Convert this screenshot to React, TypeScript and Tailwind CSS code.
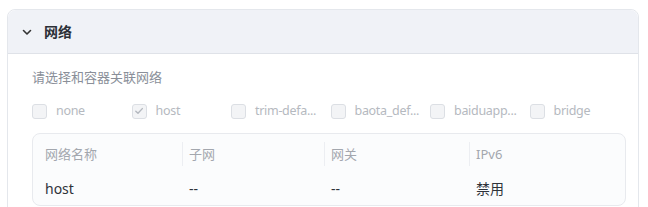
import React from "react";

const networks = [
  { name: "none", label: "none", checked: false },
  { name: "host", label: "host", checked: true },
  { name: "trim-default", label: "trim-defa...", checked: false },
  { name: "baota_default", label: "baota_def...", checked: false },
  { name: "baiduapp_default", label: "baiduapp...", checked: false },
  { name: "bridge", label: "bridge", checked: false },
];

const columns = ["网络名称", "子网", "网关", "IPv6"];
const row = ["host", "--", "--", "禁用"];

const Checkbox: React.FC<{ checked: boolean }> = ({ checked }) => (
  <span className="flex h-[15px] w-[15px] shrink-0 items-center justify-center rounded-[3px] border border-[#dcdfe4] bg-[#f3f4f6]">
    {checked && (
      <svg width="10" height="10" viewBox="0 0 10 10" fill="none">
        <path
          d="M1.8 5.2 L4 7.3 L8.3 2.6"
          stroke="#b4b8bf"
          strokeWidth="1.4"
          strokeLinecap="round"
          strokeLinejoin="round"
        />
      </svg>
    )}
  </span>
);

export default function App() {
  return (
    <div
      className="h-[207px] overflow-hidden bg-white pl-[7px] pr-[9px] pt-[9px]"
      style={{ fontFamily: '"Noto Sans", "Noto Sans CJK SC", sans-serif' }}
    >
      <div className="h-[220px] rounded-t-[8px] border border-[#e4e7ec]">
        {/* 标题栏 */}
        <div className="flex h-[44px] items-center gap-[11px] rounded-t-[8px] border-b border-[#dfe2e8] bg-[#f0f2f7] pl-[13px]">
          <svg width="12" height="12" viewBox="0 0 12 12" fill="none">
            <path
              d="M2.5 4.5 L6 8 L9.5 4.5"
              stroke="#333"
              strokeWidth="1.6"
              strokeLinecap="round"
              strokeLinejoin="round"
            />
          </svg>
          <span className="text-[14px] font-bold text-[#2b2f36]">网络</span>
        </div>

        {/* 内容 */}
        <div className="px-[24px] pt-[13px]">
          <div className="text-[13px] leading-[20px] text-[#8a8f99]">
            请选择和容器关联网络
          </div>

          <div className="mt-[14px] flex">
            {networks.map((n) => (
              <div
                key={n.name}
                title={n.name}
                className="flex w-[99.5px] shrink-0 items-center gap-[9px]"
              >
                <Checkbox checked={n.checked} />
                <span className="whitespace-nowrap text-[12.5px] leading-[20px] tracking-[-0.3px] text-[#b5b9c0]">
                  {n.label}
                </span>
              </div>
            ))}
          </div>

          <div className="mt-[12px] mr-[-12px] rounded-[8px] border border-[#e8eaee] bg-[#fbfcfd]">
            <div className="grid h-[38px] grid-cols-[150px_142px_145px_1fr] items-center pt-[2px]">
              {columns.map((c, i) => (
                <div
                  key={c}
                  className={`text-[13px] leading-[24px] text-[#a3a7ae] ${
                    i === 0 ? "pl-[12px]" : "pl-[6px]"
                  } ${i < 3 ? "border-r border-[#eceef2]" : ""}`}
                >
                  {c}
                </div>
              ))}
            </div>
            <div className="grid h-[33px] grid-cols-[150px_142px_145px_1fr] items-center">
              {row.map((v, i) => (
                <div
                  key={i}
                  className={`text-[14px] text-[#2f333a] ${
                    i === 0 ? "pl-[12px]" : "pl-[6px]"
                  }`}
                >
                  {v}
                </div>
              ))}
            </div>
          </div>
        </div>
      </div>
    </div>
  );
}
